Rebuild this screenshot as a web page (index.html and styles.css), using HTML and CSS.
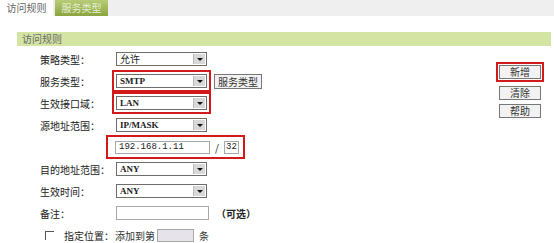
FILE: index.html
```html
<!DOCTYPE html>
<html>
<head>
    <title>访问规则</title>
    <link rel="stylesheet" href="styles.css">
</head>
<body>
    <div class="tabs">
        <div class="tab active">访问规则</div>
        <div class="tab green">服务类型</div>
    </div>

    <div class="section">
        <div class="section-title">访问规则</div>

        <div class="main">
            <div class="form">
                <div class="row">
                    <span class="label">策略类型：</span>
                    <div class="select"><span class="val">允许</span><span class="arrow"></span></div>
                </div>
                <div class="row">
                    <span class="label">服务类型：</span>
                    <div class="mark">
                        <div class="select"><span class="val latin">SMTP</span><span class="arrow"></span></div>
                    </div>
                    <span class="btn small">服务类型</span>
                </div>
                <div class="row">
                    <span class="label">生效接口域：</span>
                    <div class="mark">
                        <div class="select"><span class="val latin">LAN</span><span class="arrow"></span></div>
                    </div>
                </div>
                <div class="row">
                    <span class="label">源地址范围：</span>
                    <div class="select"><span class="val latin">IP/MASK</span><span class="arrow"></span></div>
                </div>
                <div class="row">
                    <span class="label"></span>
                    <div class="mark wide">
                        <div class="input ip">192.168.1.11</div>
                        <span class="slash">/</span>
                        <div class="input mask">32</div>
                    </div>
                </div>
                <div class="row">
                    <span class="label">目的地址范围：</span>
                    <div class="select"><span class="val latin">ANY</span><span class="arrow"></span></div>
                </div>
                <div class="row">
                    <span class="label">生效时间：</span>
                    <div class="select"><span class="val latin">ANY</span><span class="arrow"></span></div>
                </div>
                <div class="row">
                    <span class="label">备注：</span>
                    <div class="input remark"></div>
                    <span class="hint">（可选）</span>
                </div>
                <div class="row">
                    <span class="check"></span>
                    <span class="label short">指定位置：</span>
                    <span class="text">添加到第</span>
                    <div class="input pos"></div>
                    <span class="text">条</span>
                </div>
            </div>

            <div class="actions">
                <div class="mark btn-mark"><span class="btn">新增</span></div>
                <span class="btn">清除</span>
                <span class="btn">帮助</span>
            </div>
        </div>
    </div>
</body>
</html>
```

FILE: styles.css
```css
body {
    margin: 0;
    font-family: "Noto Sans CJK SC", "DejaVu Sans", sans-serif;
    font-size: 10px;
    color: #222;
    background-color: #fff;
}

.tabs {
    display: flex;
    gap: 2px;
    height: 16px;
    background-color: #efefef;
}

.tab {
    width: 53px;
    height: 16px;
    line-height: 15px;
    text-align: center;
    font-size: 10px;
    color: #666;
}

.tab.active {
    background-color: #fff;
}

.tab.green {
    background: linear-gradient(#b7cc76, #8ba540);
    color: #e6eed2;
}

.section {
    padding: 16px 3px 0 17px;
}

.section-title {
    height: 14px;
    line-height: 13px;
    padding-left: 5px;
    background-color: #d3e4a3;
    color: #6a6a6a;
    font-size: 10px;
}

.main {
    display: flex;
    justify-content: space-between;
    padding-top: 2px;
}

.form {
    display: flex;
    flex-direction: column;
}

.row {
    display: flex;
    align-items: center;
    height: 22px;
    white-space: nowrap;
}

.row > * {
    flex-shrink: 0;
}

.label {
    width: 76px;
    padding-left: 23px;
    color: #222;
}

.label.short {
    width: 51px;
    padding-left: 10px;
}

.select {
    display: flex;
    width: 89px;
    height: 12px;
    border: 1px solid #6d6d6d;
    background-color: #fff;
}

.val {
    flex: 1;
    padding-left: 3px;
    font-size: 10px;
    line-height: 12px;
}

.latin {
    font-family: "Liberation Serif", serif;
    font-weight: bold;
    font-size: 9px;
}

.arrow {
    position: relative;
    width: 11px;
    margin: 1px;
    background-color: #d8d8d8;
    border-left: 1px solid #bbb;
}

.arrow::after {
    content: "";
    position: absolute;
    left: 3px;
    top: 4px;
    border-left: 3px solid transparent;
    border-right: 3px solid transparent;
    border-top: 3px solid #111;
}

.mark {
    display: flex;
    align-items: center;
    margin-left: -4px;
    padding: 2px;
    border: 2px solid #d21a1a;
}

.mark.wide {
    margin-left: -10px;
    padding: 2px 4px 2px 7px;
    height: 16px;
}

.input {
    height: 11px;
    border: 1px solid #a8a8a8;
    background-color: #fff;
    font-family: "Liberation Mono", monospace;
    font-size: 9px;
    line-height: 11px;
    padding-left: 3px;
}

.input.ip {
    width: 90px;
}

.input.mask {
    width: 12px;
    padding-left: 1px;
}

.slash {
    width: 14px;
    text-align: center;
    font-size: 10px;
}

.input.remark {
    width: 88px;
    height: 12px;
}

.input.pos {
    width: 32px;
    background-color: #e6e4ea;
    margin: 0 5px 0 2px;
}

.hint {
    margin-left: 7px;
    font-weight: bold;
    font-size: 10px;
}

.check {
    width: 8px;
    height: 8px;
    margin-left: 28px;
    border-top: 1px solid #555;
    border-left: 1px solid #555;
}

.text {
    color: #333;
}

.btn {
    display: inline-block;
    height: 12px;
    line-height: 12px;
    padding: 0 3px;
    border: 1px solid #777;
    background-color: #f2f2f2;
    font-size: 10px;
    color: #333;
}

.btn.small {
    margin-left: 3px;
    height: 13px;
    line-height: 13px;
}

.actions {
    display: flex;
    flex-direction: column;
    align-items: center;
    gap: 4px;
    width: 46px;
    margin-right: 8px;
    padding-top: 14px;
}

.actions .btn {
    width: 34px;
    text-align: center;
}

.btn-mark {
    margin: 0;
    padding: 1px;
}
```
